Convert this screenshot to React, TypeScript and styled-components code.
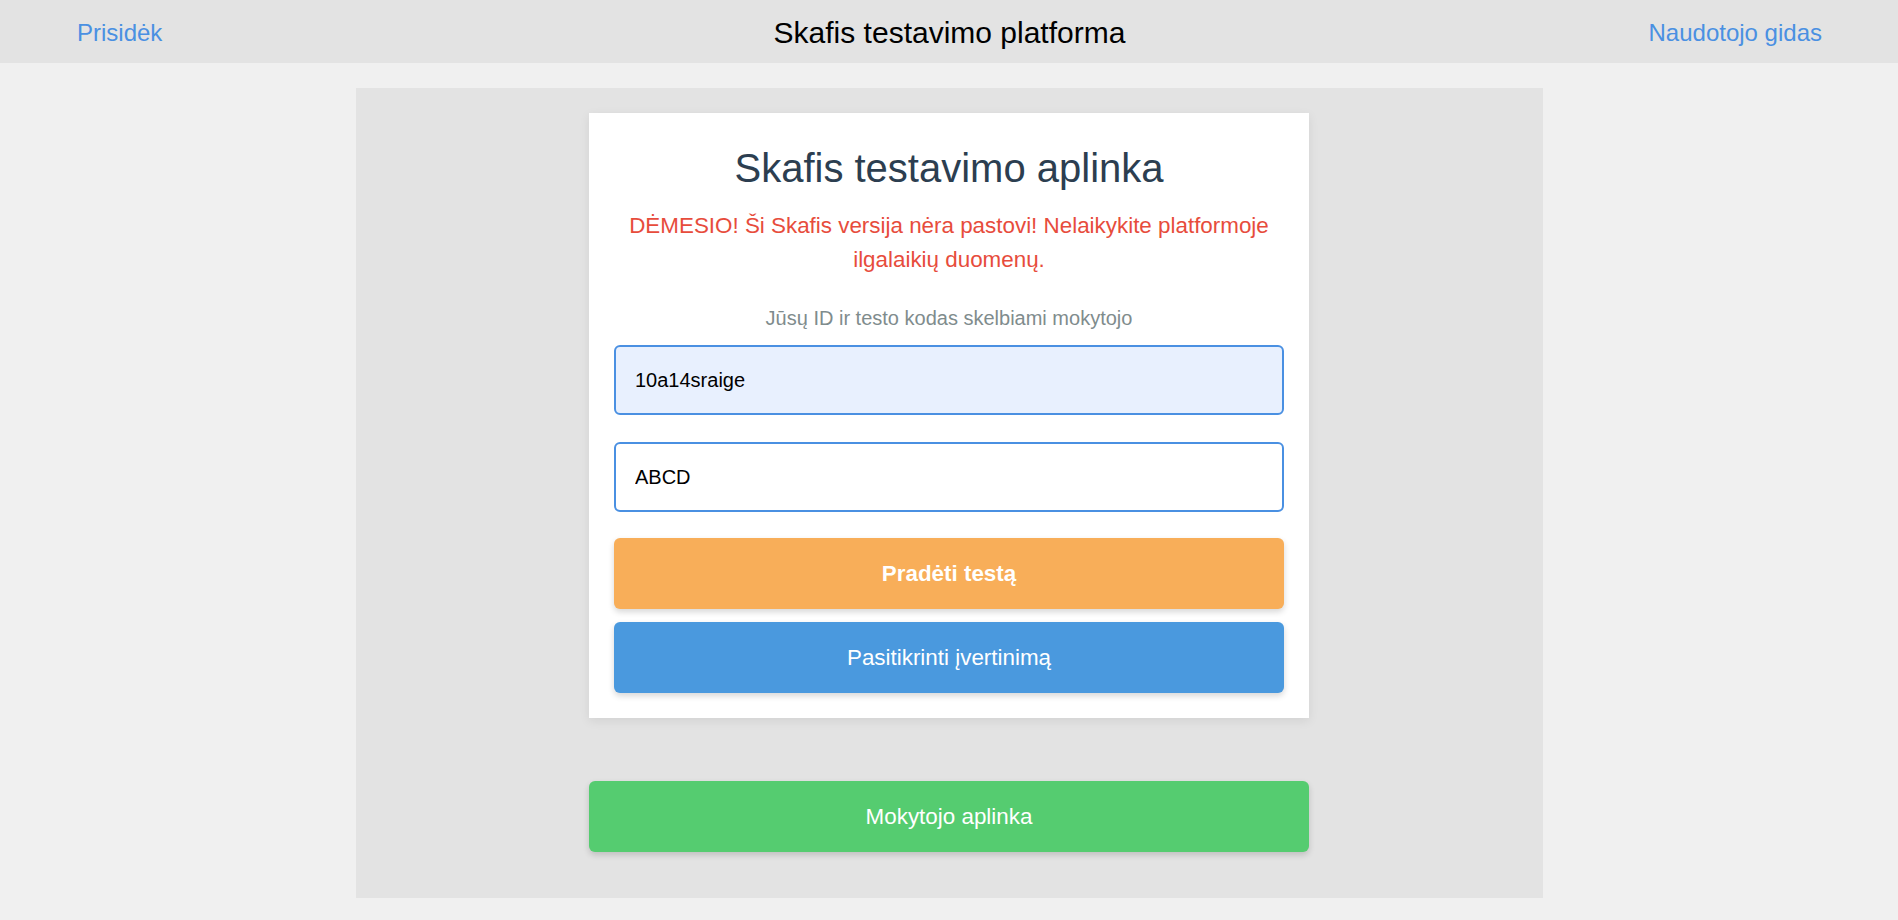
import React from "react";
import styled, { createGlobalStyle } from "styled-components";

const GlobalStyle = createGlobalStyle`
  html, body {
    margin: 0;
    padding: 0;
    background: #f0f0f0;
    font-family: "Liberation Sans", Arial, sans-serif;
  }
  * { box-sizing: border-box; }
`;

const Page = styled.div`
  min-height: 920px;
  background: #f0f0f0;
  display: flex;
  flex-direction: column;
  align-items: center;
`;

const TopBar = styled.header`
  width: 100%;
  height: 63px;
  background: #e3e3e3;
  display: grid;
  grid-template-columns: 1fr auto 1fr;
  align-items: center;
  padding: 0 76px 0 77px;
`;

const NavLink = styled.a<{ $align: "left" | "right" }>`
  justify-self: ${(p) => (p.$align === "left" ? "start" : "end")};
  color: #4a90e2;
  font-size: 24px;
  text-decoration: none;
  cursor: pointer;
  line-height: 1;
  margin-top: 2px;
`;

const BrandTitle = styled.div`
  color: #000;
  font-size: 30px;
  line-height: 1;
  margin-top: 2px;
`;

const Panel = styled.main`
  margin-top: 25px;
  width: 1187px;
  height: 810px;
  background: #e3e3e3;
  display: flex;
  flex-direction: column;
  align-items: center;
  padding-top: 25px;
`;

const Card = styled.section`
  width: 720px;
  background: #fff;
  box-shadow: 0 3px 10px rgba(0, 0, 0, 0.08);
  padding: 25px;
  display: flex;
  flex-direction: column;
  text-align: center;
`;

const Title = styled.h1`
  margin: 6px 0 0;
  font-weight: normal;
  font-size: 40px;
  line-height: 48px;
  color: #2c3e50;
`;

const Warning = styled.p`
  margin: 17px 0 0;
  font-size: 22.4px;
  line-height: 34px;
  color: #e74c3c;
`;

const Hint = styled.p`
  margin: 29px 0 0;
  font-size: 20px;
  line-height: 24px;
  color: #7f8c8d;
`;

const Field = styled.input<{ $filled?: boolean; $gap: number }>`
  margin-top: ${(p) => p.$gap}px;
  height: 70px;
  width: 100%;
  border: 2px solid #4a90e2;
  border-radius: 6px;
  background: ${(p) => (p.$filled ? "#e8f0fe" : "#fff")};
  padding: 0 19px;
  font-family: "Liberation Sans", Arial, sans-serif;
  font-size: 20px;
  color: #000;
  outline: none;
`;

const ActionButton = styled.button<{ $bg: string; $bold?: boolean; $gap: number }>`
  margin-top: ${(p) => p.$gap}px;
  height: 71px;
  width: 100%;
  border: none;
  border-radius: 6px;
  background: ${(p) => p.$bg};
  color: #fff;
  font-family: "Liberation Sans", Arial, sans-serif;
  font-size: 22.4px;
  font-weight: ${(p) => (p.$bold ? "bold" : "normal")};
  box-shadow: 0 3px 6px rgba(0, 0, 0, 0.16);
  cursor: pointer;
  flex-shrink: 0;
`;

const TeacherButton = styled(ActionButton)`
  width: 720px;
`;

export default function App() {
  return (
    <>
      <GlobalStyle />
      <Page>
        <TopBar>
          <NavLink $align="left">Prisidėk</NavLink>
          <BrandTitle>Skafis testavimo platforma</BrandTitle>
          <NavLink $align="right">Naudotojo gidas</NavLink>
        </TopBar>
        <Panel>
          <Card>
            <Title>Skafis testavimo aplinka</Title>
            <Warning>
              DĖMESIO! Ši Skafis versija nėra pastovi! Nelaikykite platformoje
              ilgalaikių duomenų.
            </Warning>
            <Hint>Jūsų ID ir testo kodas skelbiami mokytojo</Hint>
            <Field $gap={15} $filled defaultValue="10a14sraige" />
            <Field $gap={27} defaultValue="ABCD" />
            <ActionButton $gap={26} $bg="#f8ae59" $bold>
              Pradėti testą
            </ActionButton>
            <ActionButton $gap={13} $bg="#4a99de">
              Pasitikrinti įvertinimą
            </ActionButton>
          </Card>
          <TeacherButton $gap={63} $bg="#55cc70">
            Mokytojo aplinka
          </TeacherButton>
        </Panel>
      </Page>
    </>
  );
}
